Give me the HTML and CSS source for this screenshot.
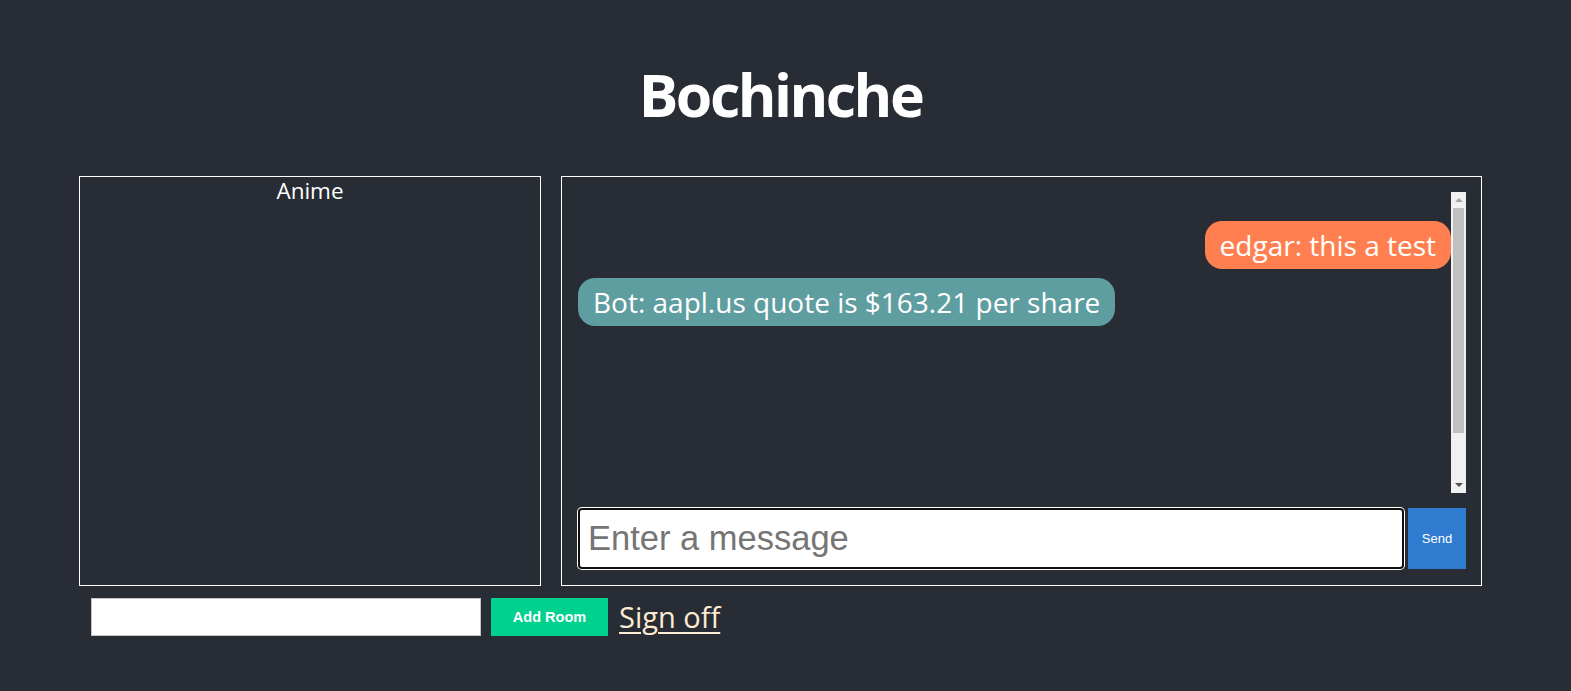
FILE: index.html
```html
<!DOCTYPE html>
<html lang="en">
<head>
<meta charset="utf-8">
<title>Bochinche</title>
<link rel="stylesheet" href="styles.css">
</head>
<body>
<div class="app">
  <h1 class="title">Bochinche</h1>
  <div class="panels">
    <div class="rooms">
      <div class="room">Anime</div>
    </div>
    <div class="chat">
      <div class="messages">
        <div class="msg-list">
          <div class="msg mine">edgar: this a test</div>
          <div class="msg bot">Bot: aapl.us quote is $163.21 per share</div>
        </div>
        <div class="scrollbar" aria-hidden="true">
          <div class="sb-btn"><span class="arrow-up"></span></div>
          <div class="sb-track"><div class="sb-thumb"></div></div>
          <div class="sb-btn"><span class="arrow-down"></span></div>
        </div>
      </div>
      <form class="composer" onsubmit="return false">
        <input class="msg-input" type="text" placeholder="Enter a message">
        <button class="send-btn" type="button">Send</button>
      </form>
    </div>
  </div>
  <div class="bottom">
    <input class="room-input" type="text">
    <button class="add-btn" type="button">Add Room</button>
    <a class="signoff" href="#">Sign off</a>
  </div>
</div>
</body>
</html>
```

FILE: styles.css
```css
html, body {
  margin: 0;
  padding: 0;
  background: #282c34;
  height: 100%;
}
body {
  font-family: "Open Sans", "Noto Sans", sans-serif;
  color: #ffffff;
}
.app {
  padding: 54px 0 0 79px;
}
.title {
  margin: 0 0 42px 0;
  width: 1403px;
  text-align: center;
  font-size: 59px;
  letter-spacing: -2.5px;
  line-height: 80px;
  font-weight: 700;
  color: #ffffff;
}
.panels {
  display: flex;
  gap: 20px;
  width: 1403px;
}
.rooms {
  box-sizing: border-box;
  width: 462px;
  height: 410px;
  border: 1px solid #ffffff;
}
.room {
  text-align: center;
  font-size: 22.5px;
  line-height: 28px;
  color: #ffffff;
}
.chat {
  box-sizing: border-box;
  width: 921px;
  height: 410px;
  border: 1px solid #ffffff;
  padding: 15px 15px 15px 16px;
  display: flex;
  flex-direction: column;
  gap: 15px;
}
.messages {
  height: 301px;
  display: flex;
}
.msg-list {
  flex: 1;
  overflow: hidden;
  display: flex;
  flex-direction: column;
  gap: 9px;
  padding-top: 29px;
}
.scrollbar {
  width: 15px;
  display: flex;
  flex-direction: column;
  background: #f1f1f1;
}
.sb-btn {
  height: 16px;
  display: flex;
  align-items: center;
  justify-content: center;
}
.arrow-up {
  width: 0;
  height: 0;
  border-left: 4px solid transparent;
  border-right: 4px solid transparent;
  border-bottom: 4px solid #a3a3a3;
}
.arrow-down {
  width: 0;
  height: 0;
  border-left: 4px solid transparent;
  border-right: 4px solid transparent;
  border-top: 4px solid #505050;
}
.sb-track {
  flex: 1;
  padding: 0 2px;
}
.sb-thumb {
  height: 225px;
  background: #c1c1c1;
}
.msg {
  font-size: 28px;
  line-height: 48px;
  height: 48px;
  padding: 0 15px;
  border-radius: 17px;
  color: #ffffff;
  white-space: nowrap;
}
.mine {
  align-self: flex-end;
  background: #ff7f50;
}
.bot {
  align-self: flex-start;
  background: #5f9ea0;
}
.composer {
  display: flex;
  gap: 4px;
  margin: 0;
  height: 61px;
}
.msg-input {
  box-sizing: border-box;
  flex: 1;
  height: 61px;
  border: 2px solid #101010;
  border-radius: 4px;
  box-shadow: 0 0 0 1px #ffffff;
  outline: none;
  padding: 0 8px;
  font-family: "Liberation Sans", Arial, sans-serif;
  font-size: 34.5px;
  background: #ffffff;
  color: #000;
}
.msg-input::placeholder {
  color: #757575;
}
.send-btn {
  width: 58px;
  height: 61px;
  border: none;
  background: #2f7bd0;
  color: #ffffff;
  font-family: "Liberation Sans", Arial, sans-serif;
  font-size: 13px;
  padding: 0;
}
.bottom {
  display: flex;
  align-items: center;
  gap: 10px;
  margin: 11px 0 0 12px;
}
.room-input {
  box-sizing: border-box;
  width: 390px;
  height: 38px;
  border: 1px solid #c4c4c4;
  background: #ffffff;
  margin: 0;
}
.add-btn {
  width: 117px;
  height: 38px;
  border: none;
  background: #00d18f;
  color: #ffffff;
  font-family: "Liberation Sans", Arial, sans-serif;
  font-weight: 700;
  font-size: 14.5px;
  padding: 0;
}
.signoff {
  margin-left: 1px;
  font-size: 29px;
  color: #fdebd3;
  text-decoration: underline;
  text-underline-offset: 4px;
  text-decoration-thickness: 2px;
}
```
